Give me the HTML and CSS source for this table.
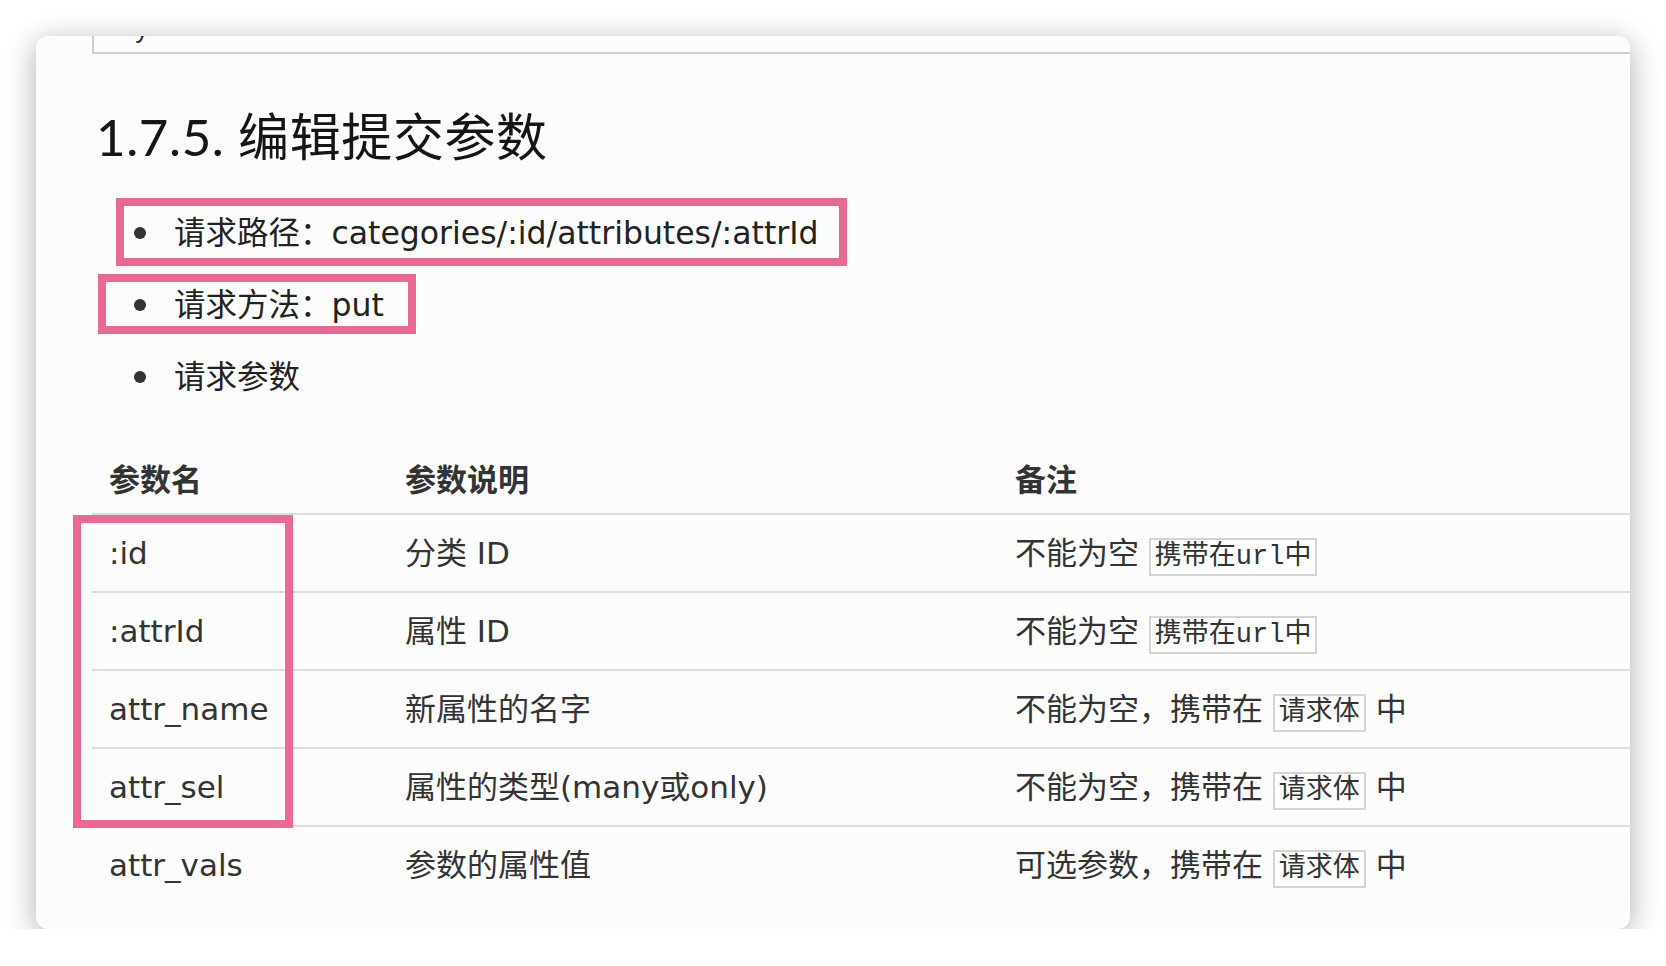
FILE: index.html
```html
<!DOCTYPE html>
<html lang="zh-CN">
<head>
<meta charset="utf-8">
<title>1.7.5. 编辑提交参数</title>
<link rel="stylesheet" href="styles.css">
</head>
<body>
<div class="window">
  <div class="doc">
    <pre class="code-tail"><span class="code-line">y</span></pre>
    <h3 class="heading">1.7.5. 编辑提交参数</h3>
    <ul class="list">
      <li class="item mark"><span class="dot"></span><span>请求路径：categories/:id/attributes/:attrId</span></li>
      <li class="item mark mark-2"><span class="dot"></span><span>请求方法：put</span></li>
      <li class="item"><span class="dot"></span><span>请求参数</span></li>
    </ul>
    <div class="table-wrap">
      <table class="params">
        <thead>
          <tr><th class="c1">参数名</th><th class="c2">参数说明</th><th class="c3">备注</th></tr>
        </thead>
        <tbody>
          <tr><td>:id</td><td>分类 ID</td><td>不能为空 <code>携带在url中</code></td></tr>
          <tr><td>:attrId</td><td>属性 ID</td><td>不能为空 <code>携带在url中</code></td></tr>
          <tr><td>attr_name</td><td>新属性的名字</td><td>不能为空，携带在 <code>请求体</code> 中</td></tr>
          <tr><td>attr_sel</td><td>属性的类型(many或only)</td><td>不能为空，携带在 <code>请求体</code> 中</td></tr>
          <tr><td>attr_vals</td><td>参数的属性值</td><td>可选参数，携带在 <code>请求体</code> 中</td></tr>
        </tbody>
      </table>
      <div class="mark-box"></div>
    </div>
  </div>
</div>
</body>
</html>
```

FILE: styles.css
```css
html, body {
  margin: 0;
  padding: 0;
  background: #ffffff;
}

body {
  font-family: "DejaVu Sans", "Noto Sans CJK SC", sans-serif;
  color: #333;
}

.window {
  margin: 36px 0 0 36px;
  width: 1594px;
  height: 893px;
  border-radius: 12px;
  overflow: hidden;
  background: #fcfcfc;
  box-shadow: 0 6px 30px rgba(0, 0, 0, 0.32);
}

.doc {
  padding-left: 56px;
  width: 1700px;
}

.code-tail {
  margin: 0;
  height: 16px;
  padding-left: 40px;
  border-left: 2px solid #cfcfcf;
  border-bottom: 2px solid #cfcfcf;
  overflow: hidden;
  font-family: "Liberation Mono", monospace;
  font-size: 27px;
  line-height: 30px;
  color: #333;
}

.code-line {
  display: block;
  margin-top: -21px;
}

.heading {
  margin: 53px 0 0 4px;
  font-family: "Lato", "Noto Sans CJK SC", sans-serif;
  font-size: 51px;
  line-height: 60px;
  font-weight: normal;
  letter-spacing: 0.6px;
  color: #151515;
}

.list {
  list-style: none;
  margin: 41px 0 0 0;
  padding: 0;
}

.item {
  display: flex;
  align-items: center;
  padding-left: 42px;
  font-size: 31.5px;
  line-height: 50px;
  color: #222;
  position: relative;
  white-space: nowrap;
}

.item + .item {
  margin-top: 22px;
}

.dot {
  width: 12px;
  height: 12px;
  border-radius: 50%;
  background: #333;
  margin-right: 28px;
  flex: none;
}

.mark::after {
  content: "";
  position: absolute;
  left: 24px;
  top: -10px;
  width: 731px;
  height: 68px;
  box-sizing: border-box;
  border: 8px solid #ea6894;
}

.mark-2::after {
  left: 6px;
  top: -6px;
  width: 318px;
  height: 60px;
}

.table-wrap {
  position: relative;
  margin-top: 35px;
}

.params {
  border-collapse: collapse;
  width: 1650px;
  font-size: 31px;
  color: #333;
}

.params th,
.params td {
  text-align: left;
  vertical-align: middle;
  padding: 0 17px;
  height: 76px;
  line-height: 40px;
  white-space: nowrap;
}

.params th {
  font-weight: bold;
  padding-top: 10px;
  height: 66px;
  border-bottom: 2px solid #dddddd;
}

.params .c1 { width: 262px; }
.params .c2 { width: 576px; }

.params tbody tr + tr td {
  border-top: 2px solid #dddddd;
}

.params code {
  font-family: "Liberation Mono", "Noto Sans CJK SC", monospace;
  font-size: 27px;
  line-height: 30px;
  border: 2px solid #d4d4d4;
  padding: 2px 4px;
  background: #fdfdfd;
  color: #333;
}

.mark-box {
  position: absolute;
  left: -19px;
  top: 78px;
  width: 220px;
  height: 313px;
  box-sizing: border-box;
  border: 8px solid #ea6894;
}
```
